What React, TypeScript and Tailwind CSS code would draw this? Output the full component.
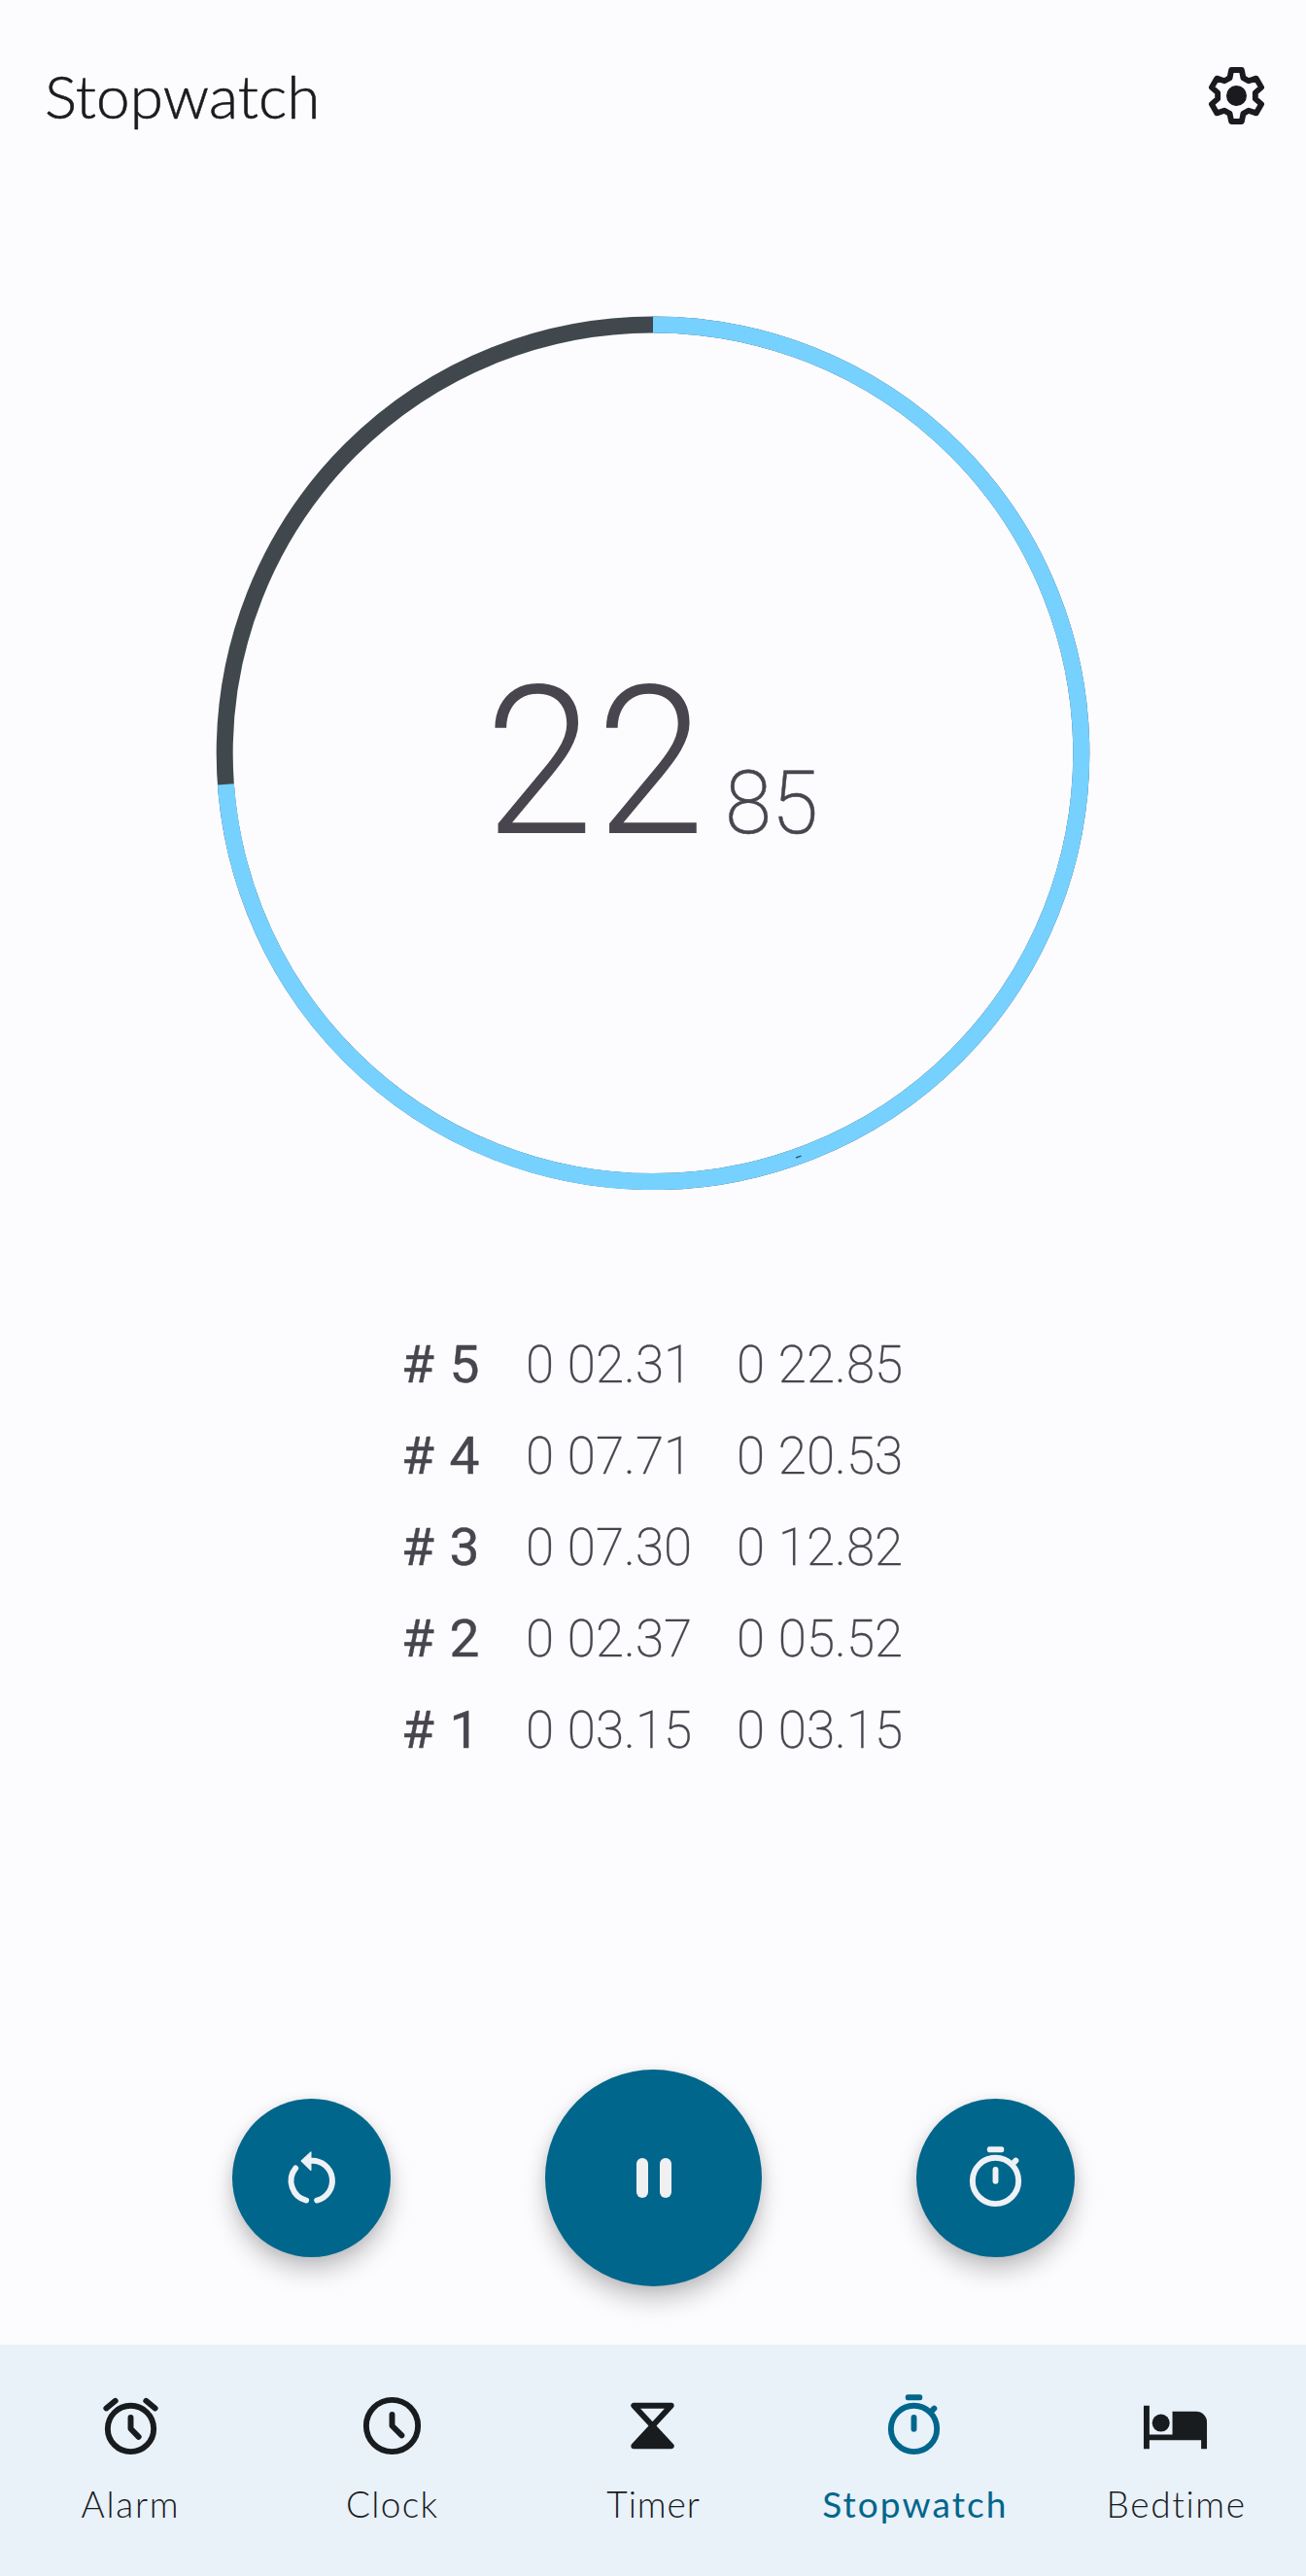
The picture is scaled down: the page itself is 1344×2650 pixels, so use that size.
import type { ReactNode } from 'react';

function Icon({ children }: { children: ReactNode }) {
  return (
    <svg
      viewBox="0 0 24 24"
      className="block size-[71px] shrink-0"
      fill="none"
      stroke="currentColor"
      strokeWidth={2}
      strokeLinecap="round"
      strokeLinejoin="round"
    >
      {children}
    </svg>
  );
}

// One tooth of the gear, repeated six times round the centre.
const tooth = [[-2.35, -6.2], [-1.8, -8.95], [1.8, -8.95], [2.35, -6.2]];
const gearPoints = [0, 1, 2, 3, 4, 5]
  .flatMap((n) => {
    const a = (n * Math.PI) / 3;
    return tooth.map(
      ([x, y]) =>
        `${(12 + x * Math.cos(a) - y * Math.sin(a)).toFixed(2)},${(12 + x * Math.sin(a) + y * Math.cos(a)).toFixed(2)}`,
    );
  })
  .join(' ');

const GearIcon = () => (
  <Icon>
    <polygon points={gearPoints} />
    <circle cx="12" cy="12" r="3.55" fill="currentColor" stroke="none" />
  </Icon>
);

const StopwatchIcon = () => (
  <Icon>
    <circle cx="12" cy="13" r="8" />
    <path d="M12 9.1v4" />
    <rect x="9.05" y="1.1" width="5.9" height="2" rx="0.85" fill="currentColor" stroke="none" />
    <path d="M17.7 7.3l1.35-1.35" />
  </Icon>
);

const AlarmIcon = () => (
  <Icon>
    <circle cx="12" cy="13" r="8" />
    <path d="M12 9.1V13l2.75 2.85M3.5 5.9l3.15-2.6M20.5 5.9l-3.15-2.6" />
  </Icon>
);

const ClockIcon = () => (
  <Icon>
    <circle cx="12" cy="12" r="9" />
    <path d="M12 8.1V12l3.35 3.35" />
  </Icon>
);

const HourglassIcon = () => (
  <Icon>
    <path d="M5.5 5h13L12 12z" />
    <path d="M12 12l6.5 7h-13z" fill="currentColor" />
  </Icon>
);

const BedIcon = () => (
  <Icon>
    <g fill="currentColor" stroke="none">
      <circle cx="7" cy="11" r="3.05" />
      <path d="M19.3 7H11v8H3V5H1v15h2v-3h18v3h2v-9.3A3.7 3.7 0 0 0 19.3 7z" />
    </g>
  </Icon>
);

const ResetIcon = () => (
  <Icon>
    <path d="M10.2 19.8A7 7 0 0 1 6.5 8.6M13.9 19.8A7 7 0 0 0 12 6" />
    <path d="M8.5 6.1l3.3-3.1v6.3z" fill="currentColor" strokeWidth={0.4} />
  </Icon>
);

const laps = [
  ['# 5', '0 02.31', '0 22.85'],
  ['# 4', '0 07.71', '0 20.53'],
  ['# 3', '0 07.30', '0 12.82'],
  ['# 2', '0 02.37', '0 05.52'],
  ['# 1', '0 03.15', '0 03.15'],
];

const tabs = [
  { label: 'Alarm', icon: <AlarmIcon />, style: 'tracking-[1.7px]' },
  { label: 'Clock', icon: <ClockIcon />, style: 'tracking-[1.25px] pl-px' },
  { label: 'Timer', icon: <HourglassIcon />, style: 'tracking-[0.9px] pl-px' },
  { label: 'Stopwatch', icon: <StopwatchIcon />, style: 'tracking-[2.1px] pl-0.5 font-normal', active: true },
  { label: 'Bedtime', icon: <BedIcon />, style: 'tracking-[1.6px] pl-0.5' },
];

const roundButton =
  'flex shrink-0 items-center justify-center rounded-full bg-[#00668b] text-[#eef1f6] shadow-[0_14px_24px_rgba(0,0,0,0.22),0_2px_12px_rgba(0,0,0,0.08)]';

export default function App() {
  return (
    <div className="flex h-[2650px] w-[1344px] flex-col overflow-hidden bg-[#fcfcff] font-['Lato',sans-serif] text-[#1b1b1f]">
      <header className="flex h-[196px] shrink-0 items-center justify-between pr-9 pl-[46px]">
        <h1 className="text-[62px] leading-[80px] font-light tracking-[0.1px] [-webkit-text-stroke:0.6px_currentColor]">
          Stopwatch
        </h1>
        <GearIcon />
      </header>

      <section className="mx-auto mt-32 grid size-[900px] shrink-0 font-['Roboto',sans-serif] text-[#48454e]">
        <svg viewBox="0 0 900 900" className="col-start-1 row-start-1 size-[900px]" fill="none" strokeWidth={17}>
          <circle cx="450" cy="450.8" r="440.8" stroke="#41484d" />
          <circle
            cx="450"
            cy="450.8"
            r="440.8"
            stroke="#76d1ff"
            pathLength={360}
            strokeDasharray="265.8 360"
            transform="rotate(-90 450 450.8)"
          />
          <path d="M597 867l5.5-1.9" stroke="#2c5a70" strokeWidth={1.5} />
        </svg>
        <div className="col-start-1 row-start-1 mt-[335px] flex items-baseline self-start pl-[277px] font-[280]">
          <span className="w-[247px] origin-left scale-x-[0.945] text-[213px] leading-[250px] tracking-[3px]">22</span>
          <span className="origin-left scale-x-[0.96] text-[91px] leading-[106px] font-extralight [-webkit-text-stroke:0.5px_currentColor]">
            85
          </span>
        </div>
      </section>

      <ul className="mt-[133px] shrink-0 pl-[413px] font-['Roboto',sans-serif] text-[54px] leading-[94px] text-[#48454e]">
        {laps.map(([name, lap, total]) => (
          <li key={name} className="grid grid-cols-[127.7px_217.8px_180px] font-extralight whitespace-nowrap">
            <span className="w-[90px] origin-left scale-x-[1.02] font-normal [word-spacing:2px] [-webkit-text-stroke:0.4px_currentColor]">
              {name}
            </span>
            <span className="w-[180px] origin-left scale-x-[0.98] [word-spacing:1px] [-webkit-text-stroke:0.3px_currentColor]">
              {lap}
            </span>
            <span className="w-[180px] origin-left scale-x-[0.98] [word-spacing:1px] [-webkit-text-stroke:0.3px_currentColor]">
              {total}
            </span>
          </li>
        ))}
      </ul>

      <div className="mt-[302px] flex shrink-0 items-center justify-center gap-[159px] pl-px">
        <button className={`${roundButton} size-[163px]`} aria-label="Reset">
          <ResetIcon />
        </button>
        <button className={`${roundButton} size-[223px] gap-[11.5px] pl-px`} aria-label="Pause">
          <span className="h-[41px] w-[12.5px] rounded-full bg-[#f0f0f3]" />
          <span className="h-[41px] w-[12.5px] rounded-full bg-[#f0f0f3]" />
        </button>
        <button className={`${roundButton} size-[163px]`} aria-label="Lap">
          <StopwatchIcon />
        </button>
      </div>

      <nav className="mt-auto grid h-[238px] shrink-0 grid-cols-5 bg-[#e9f1f9] pt-12 text-[#191c1e]">
        {tabs.map(({ label, icon, style, active }) => (
          <div key={label} className={`flex flex-col items-center gap-[23px] ${active ? 'text-[#00668b]' : ''}`}>
            {icon}
            <span className={`text-[37px] leading-[44px] ${active ? '' : 'font-light'} ${style}`}>{label}</span>
          </div>
        ))}
      </nav>
    </div>
  );
}
